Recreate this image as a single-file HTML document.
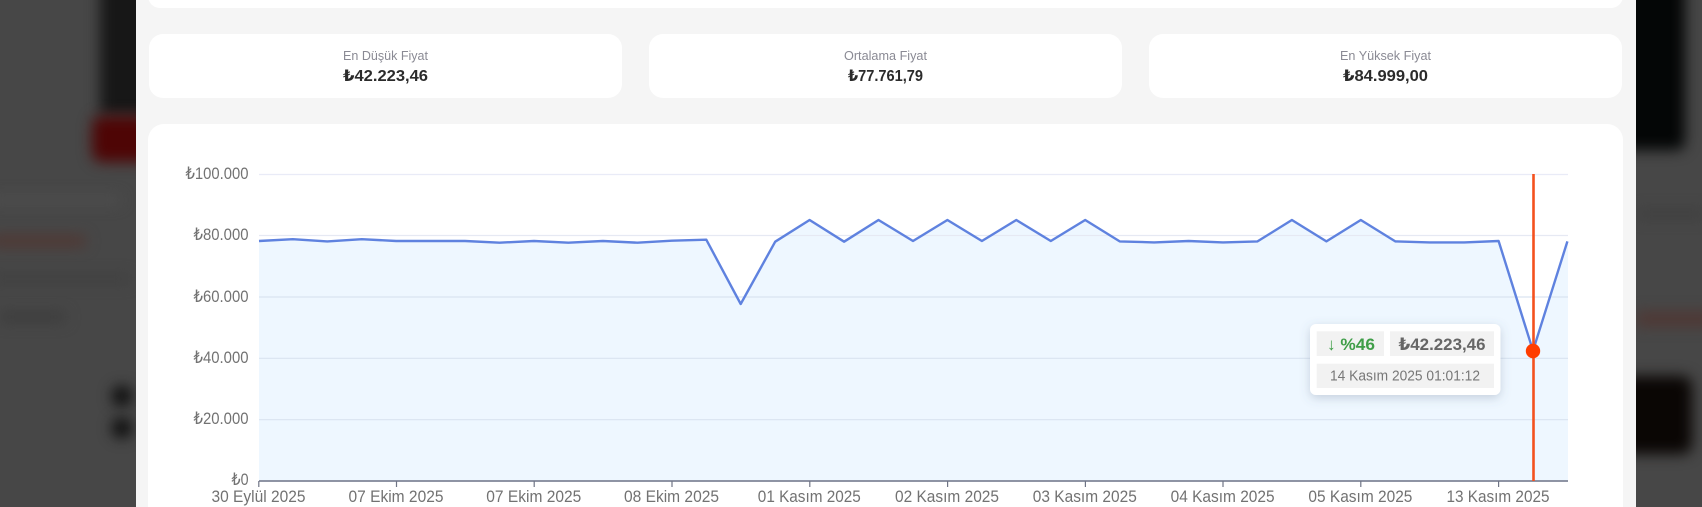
<!DOCTYPE html>
<html lang="tr">
<head>
<meta charset="utf-8">
<title>Fiyat Geçmişi</title>
<style>
html,body{margin:0;padding:0;width:1702px;height:507px;overflow:hidden;background:#474747;font-family:"Liberation Sans",sans-serif}
#root{position:absolute;left:0;top:0;width:1702px;height:507px;overflow:hidden;background:#474747}
.bg{position:absolute;filter:blur(7px)}
.panel{position:absolute;left:136px;top:0;width:1500px;height:507px;background:#f5f5f5}
.card{position:absolute;background:#fff}
.stat{top:34px;height:64px;border-radius:14px}
svg{position:absolute;left:0;top:0}
text{font-family:"Liberation Sans","DejaVu Sans",sans-serif}
</style>
</head>
<body>
<div id="root">
<div class="bg" style="left:100px;top:-20px;width:60px;height:135px;background:#171717"></div>
<div class="bg" style="left:92px;top:116px;width:60px;height:46px;background:#4e0505;border-radius:10px"></div>
<div class="bg" style="left:-10px;top:236px;width:95px;height:10px;background:#523530"></div>
<div class="bg" style="left:-10px;top:196px;width:130px;height:8px;background:#4f4f4f"></div>
<div class="bg" style="left:-10px;top:275px;width:140px;height:8px;background:#3f3f3f"></div>
<div class="bg" style="left:0;top:312px;width:65px;height:10px;background:#3c3c3c"></div>
<div class="bg" style="left:112px;top:386px;width:20px;height:20px;border-radius:50%;background:#0a0a0a"></div>
<div class="bg" style="left:112px;top:418px;width:20px;height:20px;border-radius:50%;background:#0a0a0a"></div>
<div class="bg" style="left:1620px;top:-20px;width:65px;height:170px;background:#040606;border-radius:8px"></div>
<div class="bg" style="left:1620px;top:376px;width:72px;height:78px;background:#0a0604;border-radius:10px"></div>
<div class="bg" style="left:1636px;top:312px;width:80px;height:14px;background:#503733"></div>
<div class="bg" style="left:1636px;top:210px;width:70px;height:8px;background:#3e3e3e"></div>

<div class="panel"></div>
<div class="card" style="left:148px;top:-20px;width:1475px;height:28px;border-radius:12px"></div>
<div class="card stat" style="left:149px;width:473px"></div>
<div class="card stat" style="left:649px;width:473px"></div>
<div class="card stat" style="left:1149px;width:473px"></div>
<div class="card" style="left:148px;top:124px;width:1475px;height:383px;border-radius:16px 16px 0 0"></div>

<svg width="1702" height="507" viewBox="0 0 1702 507" xmlns="http://www.w3.org/2000/svg">
  <defs>
    <filter id="sh" x="-20%" y="-30%" width="140%" height="170%">
      <feDropShadow dx="0" dy="3" stdDeviation="5" flood-color="#5a6a85" flood-opacity=".28"/>
    </filter>
  </defs>

  <!-- stat text -->
  <g text-anchor="middle">
    <text x="385.5" y="60" font-size="13" fill="#8a8a94" textLength="85" lengthAdjust="spacingAndGlyphs">En Düşük Fiyat</text>
    <text x="385.5" y="81" font-size="16" font-weight="700" fill="#2b2b2b" textLength="85" lengthAdjust="spacingAndGlyphs">₺42.223,46</text>
    <text x="885.5" y="60" font-size="13" fill="#8a8a94" textLength="83" lengthAdjust="spacingAndGlyphs">Ortalama Fiyat</text>
    <text x="885.5" y="81" font-size="16" font-weight="700" fill="#2b2b2b" textLength="75" lengthAdjust="spacingAndGlyphs">₺77.761,79</text>
    <text x="1385.5" y="60" font-size="13" fill="#8a8a94" textLength="91" lengthAdjust="spacingAndGlyphs">En Yüksek Fiyat</text>
    <text x="1385.5" y="81" font-size="16" font-weight="700" fill="#2b2b2b" textLength="85" lengthAdjust="spacingAndGlyphs">₺84.999,00</text>
  </g>

  <!-- area -->
  <polygon fill="#eef7ff" points="259,481 259,241.3 293.4,239.5 327.9,241.7 362.4,239.5 396.8,241.3 431.3,241.3 465.7,241.3 500.2,243 534.6,241.3 569,243 603.5,241.3 638,243 672.4,241 706.9,240 741.3,304.3 775.8,242 810.2,220.3 844.7,242 879.1,220.3 913.6,241.3 948,220.3 982.5,241.3 1016.9,220.3 1051.4,241.3 1085.8,220.3 1120.3,241.7 1154.7,242.7 1189.2,241.3 1223.6,242.7 1258.1,241.7 1292.5,220.3 1327,241.7 1361.4,220.3 1395.9,241.7 1430.3,242.7 1464.8,242.7 1499.2,241.3 1533.6,351 1568,241.7 1568,481"/>

  <!-- grid -->
  <g stroke-width="1.2" fill="none">
    <line x1="259" x2="1568" y1="174.5" y2="174.5" stroke="#e9ebf7"/>
    <line x1="259" x2="1568" y1="235.500" y2="235.500" stroke="#e6e9f3"/>
    <line x1="259" x2="1568" y1="297" y2="297" stroke="#d9e4f1"/>
    <line x1="259" x2="1568" y1="358.300" y2="358.300" stroke="#d9e4f1"/>
    <line x1="259" x2="1568" y1="419.700" y2="419.700" stroke="#d9e4f1"/>
  </g>

  <!-- axis -->
  <line x1="259" x2="1568" y1="481" y2="481" stroke="#7f8597" stroke-width="1.8"/>
  <g stroke="#6f7485" stroke-width="1.2">
    <line x1="258.800" x2="258.800" y1="481" y2="487"/>
    <line x1="396.500" x2="396.500" y1="481" y2="487"/>
    <line x1="534.200" x2="534.200" y1="481" y2="487"/>
    <line x1="672" x2="672" y1="481" y2="487"/>
    <line x1="809.800" x2="809.800" y1="481" y2="487"/>
    <line x1="947.600" x2="947.600" y1="481" y2="487"/>
    <line x1="1085.400" x2="1085.400" y1="481" y2="487"/>
    <line x1="1223" x2="1223" y1="481" y2="487"/>
    <line x1="1360.800" x2="1360.800" y1="481" y2="487"/>
    <line x1="1498.600" x2="1498.600" y1="481" y2="487"/>
  </g>

  <!-- y labels -->
  <g font-size="17" fill="#727272" text-anchor="end">
    <text x="248.500" y="179" textLength="63" lengthAdjust="spacingAndGlyphs">₺100.000</text>
    <text x="248.500" y="240" textLength="55" lengthAdjust="spacingAndGlyphs">₺80.000</text>
    <text x="248.500" y="302" textLength="55" lengthAdjust="spacingAndGlyphs">₺60.000</text>
    <text x="248.500" y="363" textLength="55" lengthAdjust="spacingAndGlyphs">₺40.000</text>
    <text x="248.500" y="424" textLength="55" lengthAdjust="spacingAndGlyphs">₺20.000</text>
    <text x="248.500" y="485" textLength="17" lengthAdjust="spacingAndGlyphs">₺0</text>
  </g>

  <!-- x labels -->
  <g font-size="17" fill="#727272" text-anchor="middle">
    <text x="258.500" y="502" textLength="94" lengthAdjust="spacingAndGlyphs">30 Eylül 2025</text>
    <text x="396" y="502" textLength="95" lengthAdjust="spacingAndGlyphs">07 Ekim 2025</text>
    <text x="533.800" y="502" textLength="95" lengthAdjust="spacingAndGlyphs">07 Ekim 2025</text>
    <text x="671.500" y="502" textLength="95" lengthAdjust="spacingAndGlyphs">08 Ekim 2025</text>
    <text x="809.300" y="502" textLength="103" lengthAdjust="spacingAndGlyphs">01 Kasım 2025</text>
    <text x="947" y="502" textLength="104" lengthAdjust="spacingAndGlyphs">02 Kasım 2025</text>
    <text x="1084.800" y="502" textLength="104" lengthAdjust="spacingAndGlyphs">03 Kasım 2025</text>
    <text x="1222.600" y="502" textLength="104" lengthAdjust="spacingAndGlyphs">04 Kasım 2025</text>
    <text x="1360.400" y="502" textLength="104" lengthAdjust="spacingAndGlyphs">05 Kasım 2025</text>
    <text x="1498" y="502" textLength="103" lengthAdjust="spacingAndGlyphs">13 Kasım 2025</text>
  </g>

  <!-- line -->
  <polyline fill="none" stroke="#5f82df" stroke-width="2.4" stroke-linejoin="round" transform="translate(-0.6,-0.3)" points="259.600,241.300 293.4,239.5 327.9,241.7 362.4,239.5 396.8,241.3 431.3,241.3 465.7,241.3 500.2,243 534.6,241.3 569,243 603.5,241.3 638,243 672.4,241 706.9,240 741.3,304.3 775.8,242 810.2,220.3 844.7,242 879.1,220.3 913.6,241.3 948,220.3 982.5,241.3 1016.9,220.3 1051.4,241.3 1085.8,220.3 1120.3,241.7 1154.7,242.7 1189.2,241.3 1223.6,242.7 1258.1,241.7 1292.5,220.3 1327,241.7 1361.4,220.3 1395.9,241.7 1430.3,242.7 1464.8,242.7 1499.2,241.3 1533.6,351 1568,241.7"/>

  <!-- crosshair -->
  <line x1="1533.500" x2="1533.500" y1="174" y2="481" stroke="#f4511e" stroke-width="2.6"/>
  <circle cx="1533" cy="351" r="7.200" fill="#ff3d00"/>

  <!-- tooltip -->
  <rect x="1310" y="324" width="190.500" height="71" rx="6" fill="#fff" filter="url(#sh)"/>
  <rect x="1316.7" y="331.3" width="67.300" height="24.700" fill="#f2f2f2"/>
  <rect x="1390" y="331.3" width="104" height="24.700" fill="#f2f2f2"/>
  <rect x="1316.7" y="363.7" width="177.300" height="24.300" fill="#f2f2f2"/>
  <text x="1327" y="350" font-size="17" font-weight="700" fill="#3f9e48" textLength="48" lengthAdjust="spacingAndGlyphs">↓ %46</text>
  <text x="1398.500" y="350" font-size="17" font-weight="700" fill="#666" textLength="87" lengthAdjust="spacingAndGlyphs">₺42.223,46</text>
  <text x="1330" y="380.500" font-size="14.500" fill="#777" textLength="150" lengthAdjust="spacingAndGlyphs">14 Kasım 2025 01:01:12</text>
</svg>
</div>
</body>
</html>
